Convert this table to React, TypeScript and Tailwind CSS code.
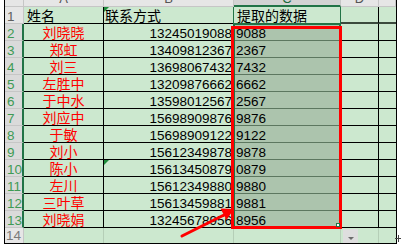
import React from "react";

const data: [string, string, string][] = [
  ["刘晓晓", "13245019088", "9088"],
  ["郑虹", "13409812367", "2367"],
  ["刘三", "13698067432", "7432"],
  ["左胜中", "13209876662", "6662"],
  ["于中水", "13598012567", "2567"],
  ["刘应中", "15698909876", "9876"],
  ["于敏", "15698909122", "9122"],
  ["刘小", "15612349878", "9878"],
  ["陈小", "15613450879", "0879"],
  ["左川", "15612349880", "9880"],
  ["三叶草", "15613459881", "9881"],
  ["刘晓娟", "13245678956", "8956"],
];

const cjk = "font-['Noto_Sans_CJK_SC',sans-serif] text-[14px] leading-[16px]";
const num = "font-['Liberation_Sans',sans-serif] text-[13.5px] leading-[13px] pt-[3px]";

function Tri() {
  return (
    <span className="absolute left-0 top-0 w-0 h-0 border-t-[5px] border-r-[5px] border-t-[#1e8c3c] border-r-transparent" />
  );
}

export default function App() {
  return (
    <div className="relative w-[401px] h-[250px] bg-white overflow-hidden text-black">
      <div className="ml-[4px] w-[393px] border-x border-b border-black grid grid-cols-[19px_80px_130px_107px_38px_17px]">
        {/* column headers, mostly scrolled out of view */}
        <div className="h-[7px] bg-[#e6e6e6] border-r border-b border-[#c6c6c6]" />
        {["A", "B", "C", "D", "E"].map((l) => (
          <div
            key={l}
            className={
              l === "C"
                ? "h-[7px] overflow-hidden bg-[#d3d3d3] border-r border-r-[#c6c6c6] border-b-2 border-b-[#217346] text-center text-[#1d6b3c] font-['Liberation_Sans',sans-serif] text-[13px] leading-[16px]"
                : "h-[7px] overflow-hidden bg-[#e6e6e6] border-r border-b border-[#c6c6c6] text-center text-[#555] font-['Liberation_Sans',sans-serif] text-[13px] leading-[16px]"
            }
          >
            <div className="-mt-[9px]">{l === "E" ? "" : l}</div>
          </div>
        ))}

        {/* row 1 */}
        <div className={`h-[17px] overflow-hidden bg-[#e6e6e6] border-r border-b border-[#c6c6c6] pl-[2px] text-[#5f5f5f] ${num}`}>1</div>
        <div className={`h-[17px] overflow-hidden bg-[#cce8cf] border-r border-b border-black pl-[3px] ${cjk}`}>姓名</div>
        <div className={`relative h-[17px] overflow-hidden bg-[#cce8cf] border-r border-r-[#217346] border-b border-b-black pl-[1px] ${cjk}`}>
          <Tri />
          联系方式
        </div>
        <div className={`h-[17px] overflow-hidden bg-[#cce8cf] border-r border-r-[#217346] border-b border-b-[#217346] pl-[3px] ${cjk}`}>提取的数据</div>
        <div className="h-[17px] bg-[#cce8cf] border-r border-r-black border-b-2 border-b-[#3b4a3d]" />
        <div className="h-[17px] bg-[#cce8cf] border-b-2 border-b-[#3b4a3d]" />

        {data.map(([name, phone, code], i) => (
          <React.Fragment key={i}>
            <div className={`h-[17px] overflow-hidden bg-[#dadada] border-r-2 border-r-[#217346] border-b border-b-[#c6c6c6] pl-[2px] text-[#3f9a55] ${num}`}>
              {i + 2}
            </div>
            <div className={`h-[17px] overflow-hidden bg-[#cce8cf] border-r border-b border-black text-center text-[#ff0000] ${cjk}`}>
              {name}
            </div>
            <div className={`relative h-[17px] overflow-hidden bg-[#cce8cf] border-r border-r-[#217346] border-b border-b-black pr-[1px] text-right ${num}`}>
              {i === 8 && <Tri />}
              {phone}
            </div>
            <div className={`h-[17px] overflow-hidden bg-[#acc4ad] border-r border-r-[#217346] border-b border-b-[#5d7760] pl-[2px] ${num}`}>
              {code}
            </div>
            <div className="h-[17px] bg-[#cce8cf] border-r border-b border-black" />
            <div className="h-[17px] bg-[#cce8cf] border-b border-black" />
          </React.Fragment>
        ))}

        {/* row 14 */}
        <div className="h-[15px] overflow-hidden bg-[#e6e6e6] border-r border-[#c6c6c6] pl-[1px] pt-[1px] text-[#7a7a7a] font-['Liberation_Sans',sans-serif] text-[13.5px] leading-[14px]">14</div>
        <div className="h-[15px] bg-[#cce8cf] border-r border-[#b5ceb7]" />
        <div className="h-[15px] bg-[#cce8cf] border-r border-[#b5ceb7]" />
        <div className="h-[15px] bg-[#cce8cf] border-r border-[#b5ceb7]" />
        <div className="h-[15px] bg-[#cce8cf] border-r border-[#b5ceb7]" />
        <div className="h-[15px] bg-[#cce8cf]" />
      </div>

      {/* selection outline */}
      <div className="absolute left-[233px] top-[23px] w-[108px] h-[205px] border-2 border-[#217346]" />
      {/* red highlight box */}
      <div className="absolute left-[231px] top-[26px] w-[111px] h-[203px] border-[3px] border-[#ff0000]" />
      {/* fill handle */}
      <div className="absolute left-[336px] top-[223px] w-[4px] h-[4px] bg-white border border-[#217346]" />

      {/* auto fill options button */}
      <div className="absolute left-[343px] top-[229px] w-[15px] h-[14px] bg-[#dedede] flex items-end justify-center pb-[3px]">
        <span className="w-0 h-0 border-x-[3px] border-x-transparent border-t-[3px] border-t-[#6b6b6b]" />
      </div>

      {/* red arrow */}
      <svg className="absolute left-0 top-0" width="401" height="250" viewBox="0 0 401 250">
        <line x1="182" y1="236" x2="224" y2="215" stroke="#ff0000" strokeWidth="3" strokeLinecap="round" />
        <polygon points="234,209 226.5,220 220.5,208.5" fill="#ff0000" />
      </svg>

      {/* cursor */}
      <div className="absolute left-[395px] top-[238px] w-[7px] h-[1px] bg-[#444]" />
      <div className="absolute left-[398px] top-[235px] w-[1px] h-[7px] bg-[#444]" />
    </div>
  );
}
